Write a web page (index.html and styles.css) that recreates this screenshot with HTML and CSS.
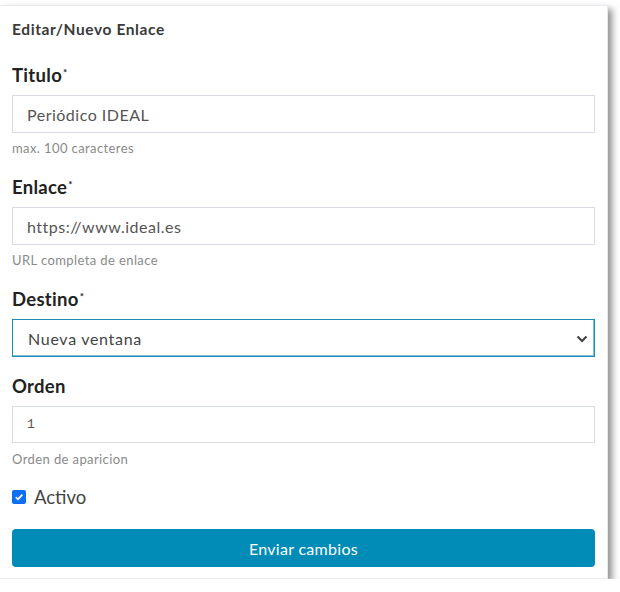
FILE: index.html
```html
<!DOCTYPE html>
<html lang="es">
<head>
<meta charset="utf-8">
<link rel="stylesheet" href="styles.css">
</head>
<body>
<div class="card">
  <div class="card-title">Editar/Nuevo Enlace</div>
  <form class="form">
    <div class="field">
      <label class="label">Titulo<sup>*</sup></label>
      <div class="input">Periódico IDEAL</div>
      <div class="help">max. 100 caracteres</div>
    </div>
    <div class="field">
      <label class="label">Enlace<sup>*</sup></label>
      <div class="input">https://www.ideal.es</div>
      <div class="help">URL completa de enlace</div>
    </div>
    <div class="field">
      <label class="label">Destino<sup>*</sup></label>
      <div class="input select">
        <span>Nueva ventana</span>
        <svg class="chev" width="12" height="8" viewBox="0 0 12 8"><path d="M1.5 1.5 L6 6 L10.5 1.5" fill="none" stroke="#444" stroke-width="2.2"/></svg>
      </div>
    </div>
    <div class="field after-select">
      <label class="label">Orden</label>
      <div class="input mono">1</div>
      <div class="help">Orden de aparicion</div>
    </div>
    <div class="check-row">
      <span class="checkbox"><svg width="10" height="10" viewBox="0 0 10 10"><path d="M1.8 5.2 L4 7.3 L8.3 2.6" fill="none" stroke="#fff" stroke-width="1.8"/></svg></span>
      <span class="check-label">Activo</span>
    </div>
    <div class="button">Enviar cambios</div>
  </form>
</div>
</body>
</html>
```
FILE: styles.css
```css
html, body {
  margin: 0;
  padding: 0;
  background: #fff;
}
body {
  font-family: Lato, "Open Sans", sans-serif;
  color: #333;
}
.card {
  margin-top: 5px;
  width: 608px;
  height: 574px;
  box-sizing: border-box;
  background: #fff;
  border: 1px solid #e6ebf0;
  border-left: none;
  box-shadow: 4px 4px 7px rgba(0,0,0,0.45);
  padding: 0 12px 0 12px;
}
.card-title {
  font-size: 15.5px;
  font-weight: 700;
  color: #3a3a3a;
  letter-spacing: 0.6px;
  padding-top: 13px;
  height: 20px;
  line-height: 20px;
}
.form {
  display: flex;
  flex-direction: column;
}
.field {
  display: flex;
  flex-direction: column;
  margin-top: 19px;
}
.card-title + .form .field:first-child {
  margin-top: 24px;
}
.field.after-select {
  margin-top: 17px;
}
.label {
  font-size: 18.5px;
  font-weight: 700;
  color: #222;
  letter-spacing: 0.3px;
  line-height: 24px;
  height: 24px;
}
.label sup {
  font-size: 10px;
  vertical-align: 0;
  position: relative;
  top: -6px;
  margin-left: 1px;
}
.input {
  margin-top: 8px;
  height: 38px;
  box-sizing: border-box;
  border: 1px solid #d8dde3;
  padding: 0 14px;
  display: flex;
  align-items: center;
  font-size: 16px;
  letter-spacing: 0.5px;
  color: #555;
  font-weight: 400;
}
.select {
  border: 1px solid #1d8bb3;
  box-shadow: inset 0 -1px 0 #7fc0d8, inset -1px 0 0 #7fc0d8;
  justify-content: space-between;
  padding-right: 6px;
  padding-left: 15px;
  color: #444;
  letter-spacing: 0.7px;
}
.chev {
  margin-top: 1px;
}
.mono {
  font-family: "Liberation Mono", "DejaVu Sans Mono", monospace;
  font-size: 13px;
  letter-spacing: 0;
  height: 37px;
  color: #555;
}
.help {
  font-size: 13px;
  color: #8a8a8a;
  letter-spacing: 0.4px;
  line-height: 16px;
  margin-top: 7px;
  height: 16px;
}
.mono + .help {
  margin-top: 8px;
}
.check-row {
  display: flex;
  align-items: center;
  margin-top: 19px;
  height: 22px;
}
.checkbox {
  width: 14px;
  height: 14px;
  border-radius: 2px;
  background: #0b6ff3;
  display: flex;
  align-items: center;
  justify-content: center;
}
.check-label {
  font-size: 18.5px;
  margin-left: 8px;
  color: #444;
  font-weight: 400;
}
.button {
  margin-top: 21px;
  height: 38px;
  background: #018cb8;
  border-radius: 4px;
  color: #fff;
  font-size: 16px;
  letter-spacing: 0.3px;
  display: flex;
  align-items: center;
  justify-content: center;
}
```
